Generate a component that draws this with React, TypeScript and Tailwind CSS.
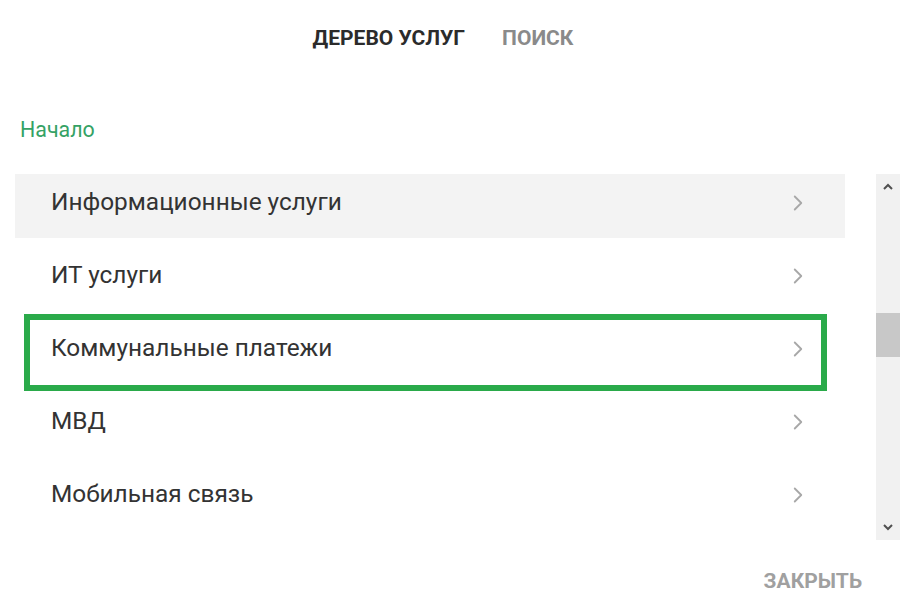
import { ChevronRight } from 'lucide-react';

const services = [
  'Информационные услуги',
  'ИТ услуги',
  'Коммунальные платежи',
  'МВД',
  'Мобильная связь',
];

function ScrollArrow({ dir }: { dir: 'up' | 'down' }) {
  return (
    <svg width="10" height="7" viewBox="0 0 10 7" className="text-[#505050]">
      {dir === 'up' ? (
        <path d="M1 6 L5 2 L9 6" fill="none" stroke="currentColor" strokeWidth="2" />
      ) : (
        <path d="M1 1 L5 5 L9 1" fill="none" stroke="currentColor" strokeWidth="2" />
      )}
    </svg>
  );
}

export default function App() {
  return (
    <div className="relative w-[900px] h-[594px] overflow-hidden bg-white font-['Roboto',sans-serif]">
      <div className="flex justify-center gap-[37px] pt-[22px] pr-[14px] text-[21px] leading-[32px] font-bold uppercase">
        <span className="text-[#2b2b2b]">Дерево услуг</span>
        <span className="text-[#8a8a8a]">Поиск</span>
      </div>

      <div className="mt-[60px] pl-[20px] text-[21.4px] leading-[32px] text-[#35a265]">Начало</div>

      <div className="mt-[28px] flex">
        <div className="relative ml-[15px] w-[830px] flex flex-col gap-[9px]">
          {services.map((s, i) => (
            <div
              key={s}
              className={
                'flex h-[64px] items-center justify-between pl-[36px] pr-[34px] pb-[7px] ' +
                (i === 0 ? 'bg-[#f3f3f3]' : '')
              }
            >
              <span className="text-[24.4px] text-[#333333]">{s}</span>
              <ChevronRight size={26} strokeWidth={1.7} className="text-[#a8a8a8]" />
            </div>
          ))}
          <div className="absolute left-[9px] top-[140px] w-[803px] h-[77px] border-[6px] border-[#2aaa4a]" />
        </div>

        <div className="ml-[31px] w-[24px] h-[366px] bg-[#f1f1f1] flex flex-col items-center justify-between py-[9px]">
          <ScrollArrow dir="up" />
          <div className="flex-1 w-full relative">
            <div className="absolute left-0 right-0 top-[123px] h-[44px] bg-[#c8c8c8]" />
          </div>
          <ScrollArrow dir="down" />
        </div>
      </div>

      <div className="absolute right-[38px] bottom-[1px] text-[21px] leading-[24px] font-bold uppercase text-[#a0a0a0]">
        Закрыть
      </div>
    </div>
  );
}
